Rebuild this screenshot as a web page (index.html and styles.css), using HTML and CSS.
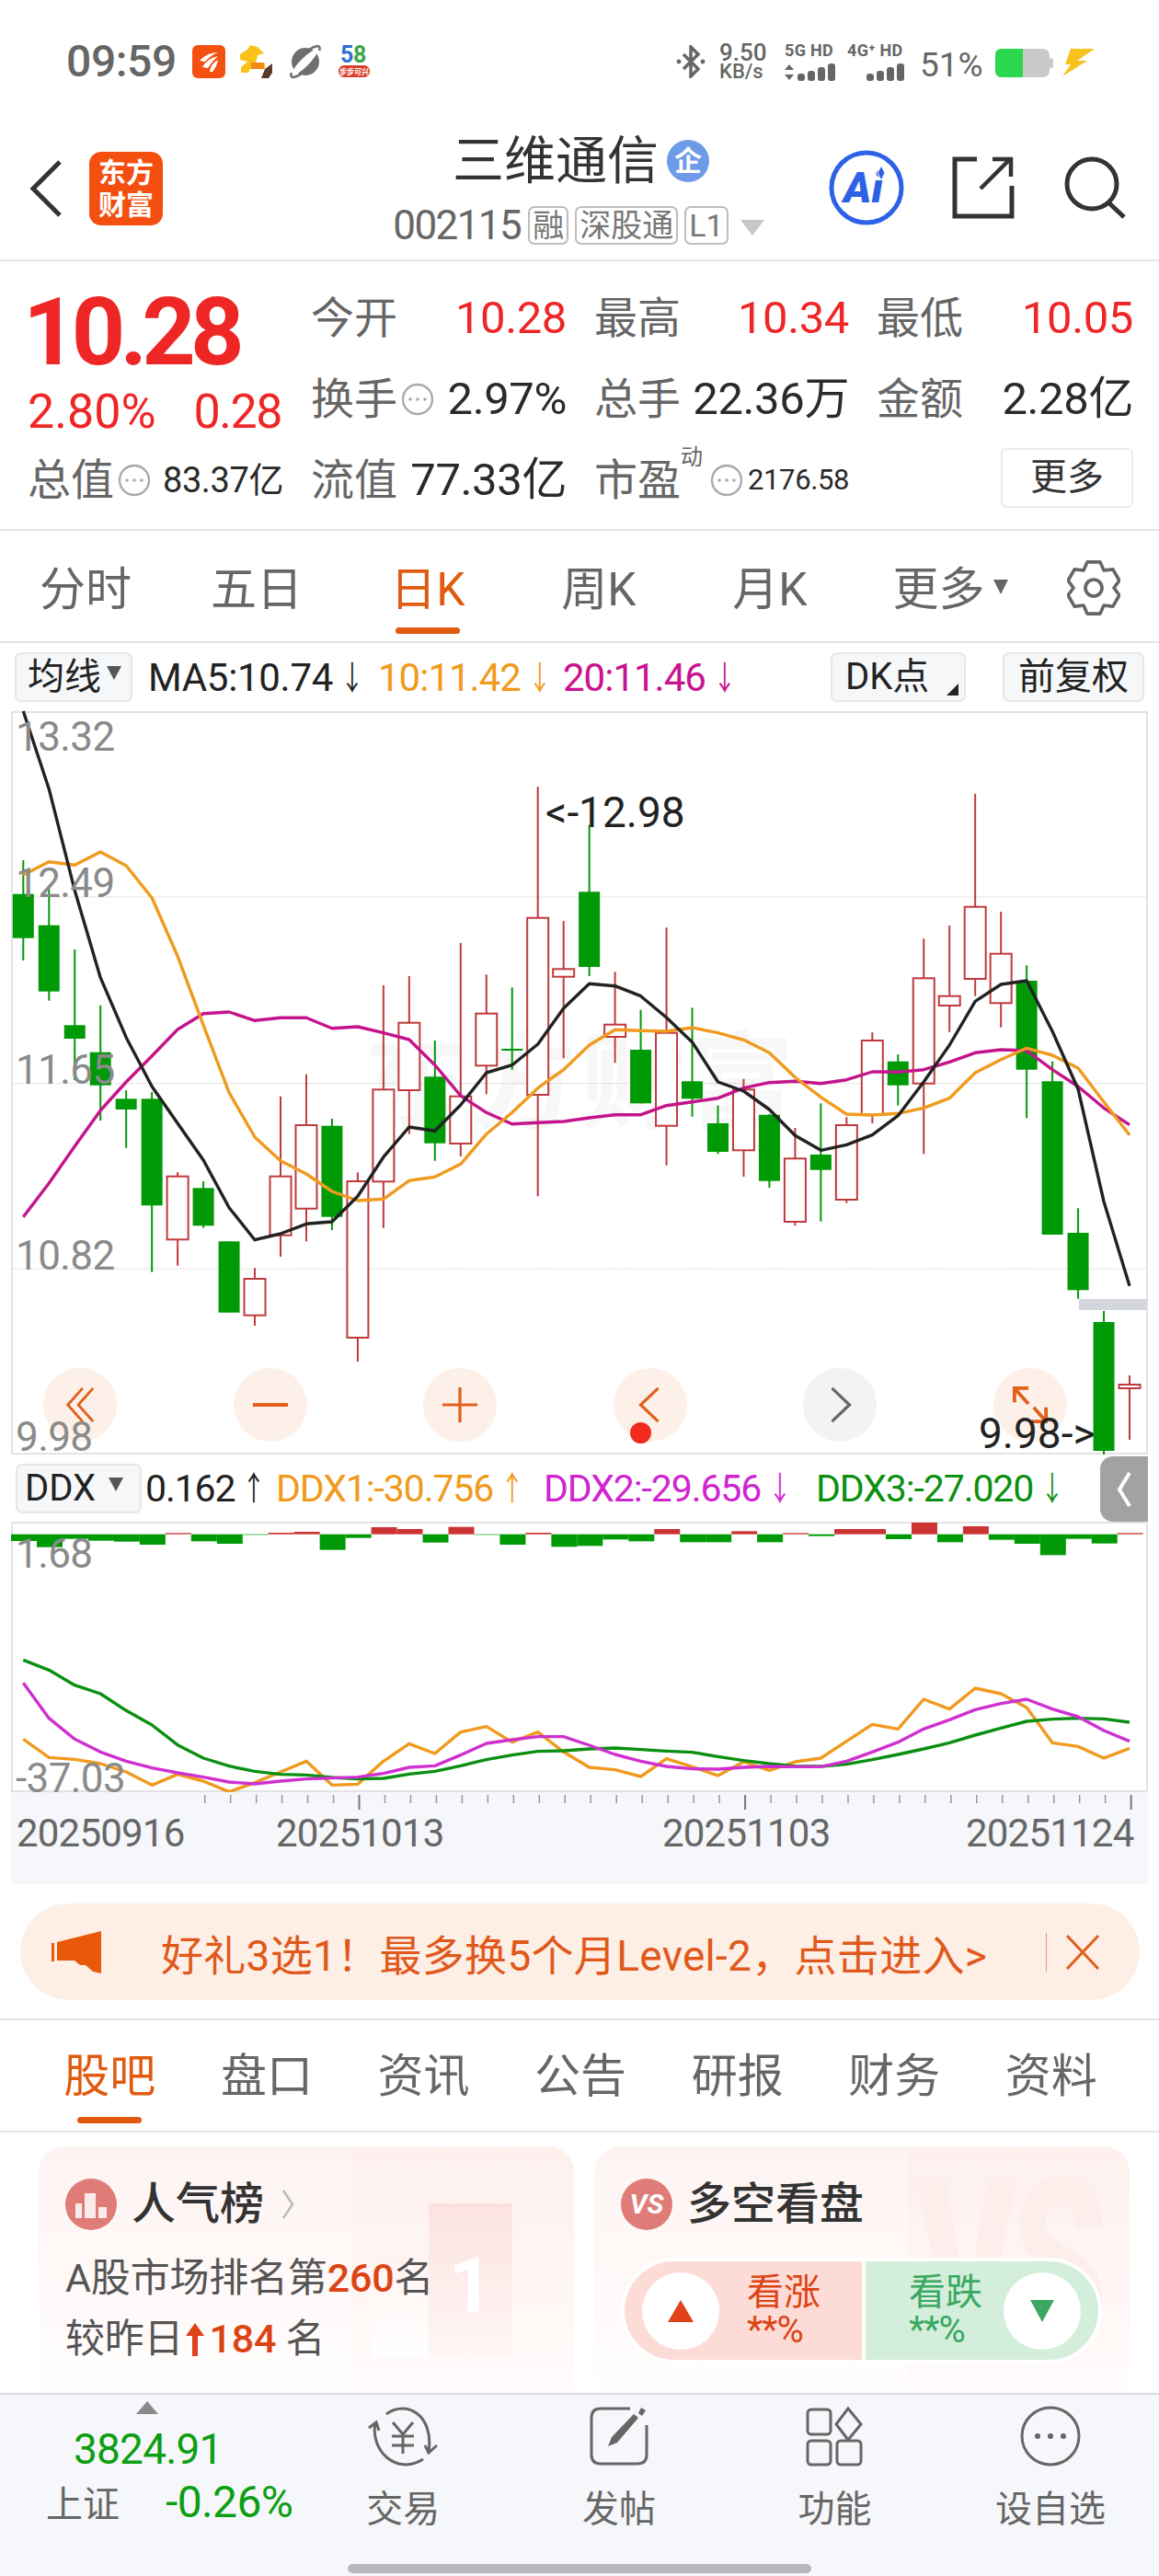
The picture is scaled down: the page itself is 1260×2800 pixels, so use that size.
FILE: index.html
```html
<!DOCTYPE html>
<html lang="zh-CN">
<head>
<meta charset="utf-8">
<title>三维通信</title>
<link rel="stylesheet" href="styles.css">
</head>
<body>
<div class="page">
  <div class="status">
    <span class="time">09:59</span>
    <svg class="app app1" viewBox="0 0 36 36"><rect width="36" height="36" rx="6" fill="#f4500f"/><path d="M8 17 Q16 8 28 8 Q20 11 14 18Z M11 24 Q17 14 28 12 Q22 17 17 25Z M19 29 Q20 20 28 16 Q27 23 22 29Z" fill="#fff"/></svg>
    <svg class="app app2" viewBox="0 0 36 36"><path d="M1 10 L10 4 L12 0 L20 2 L27 9 L20 11 L18 20 L28 20 L28 26 L12 26 L10 30 L2 30 L2 24 L9 18 L1 16Z" fill="#f9c21b"/><rect x="13" y="19" width="14" height="7" fill="#f28a18"/><path d="M24 36 L28 26 L36 20 L36 30 L32 36Z" fill="#5a3a2c"/></svg>
    <svg class="app app3" viewBox="0 0 36 36"><circle cx="18" cy="18" r="15" fill="#6f6f6f"/><ellipse cx="17" cy="19" rx="20" ry="4.5" transform="rotate(-45 17 19)" fill="#fff"/><path d="M3 30 Q1 35 5 35 Q10 34 14 31 M33 6 Q35 1 31 1 Q26 2 22 5" fill="none" stroke="#6f6f6f" stroke-width="2.5"/></svg>
    <svg class="app app4" viewBox="0 0 36 36"><text class="t58a" x="3" y="19">5</text><text class="t58b" x="17" y="19">8</text><rect x="1" y="22" width="34" height="13" rx="6" fill="#d8402c"/><text class="t58c" x="18" y="32">步步可兴</text></svg>
    <div class="sys">
      <svg class="bt" viewBox="0 0 32 36"><path d="M8 10 L24 26 L16 34 V2 L24 10 L8 26" fill="none" stroke="#666" stroke-width="3.5"/><circle cx="3" cy="18" r="2.4" fill="#666"/><circle cx="29" cy="18" r="2.4" fill="#666"/></svg>
      <div class="speed"><span class="sp1">9.50</span><span class="sp2">KB/s</span></div>
      <div class="sig s5g"><span class="sigt">5G HD</span>
        <svg class="bars" viewBox="0 0 56 20"><path d="M0 7 L5 1 L10 7Z M0 12 L5 18 L10 12Z" fill="#666"/><rect x="14" y="11" width="8" height="8" rx="3" fill="#666"/><rect x="25" y="8" width="8" height="11" rx="3" fill="#666"/><rect x="36" y="4" width="8" height="15" rx="3" fill="#666"/><rect x="47" y="0" width="8" height="19" rx="3" fill="#666"/></svg></div>
      <div class="sig s4g"><span class="sigt">4G⁺ HD</span>
        <svg class="bars2" viewBox="0 0 42 20"><rect x="0" y="11" width="8" height="8" rx="3" fill="#666"/><rect x="11" y="8" width="8" height="11" rx="3" fill="#666"/><rect x="22" y="4" width="8" height="15" rx="3" fill="#666"/><rect x="33" y="0" width="8" height="19" rx="3" fill="#666"/></svg></div>
      <span class="pct">51%</span>
      <svg class="batt" viewBox="0 0 63 31"><rect width="59" height="31" rx="7" fill="#c9c9c9"/><path d="M7 0 H30 V31 H7 Q0 31 0 24 V7 Q0 0 7 0Z" fill="#2bd74c"/><rect x="59" y="10" width="4" height="11" rx="2" fill="#c9c9c9"/></svg>
      <svg class="bolt" viewBox="0 0 35 30"><path d="M9 0 H35 L16 13 H27 L0 30 L9 17 H3Z" fill="#f6c21c"/></svg>
    </div>
  </div>

  <header class="head">
    <svg class="back" viewBox="0 0 36 64"><path d="M33 3 L4 32 L33 61" fill="none" stroke="#333" stroke-width="5"/></svg>
    <div class="logo"><span>东方</span><span>财富</span></div>
    <div class="titlebox">
      <div class="titlerow"><span class="title">三维通信</span><span class="qi">企</span></div>
      <div class="coderow"><span class="code">002115</span><span class="tag">融</span><span class="tag">深股通</span><span class="tag">L1</span><span class="tri"></span></div>
    </div>
    <div class="headicons">
      <svg class="ai" viewBox="0 0 82 84"><circle cx="41" cy="42" r="38" fill="#fff" stroke="#2d62e6" stroke-width="5"/><text class="aitxt" x="16" y="58">Ai</text><path d="M57 18 L61 26 L57 34 L53 26Z" fill="#2d62e6" stroke="#fff" stroke-width="1"/></svg>
      <svg class="share" viewBox="0 0 68 68"><path d="M27 3 H3 V65 H65 V32" fill="none" stroke="#333" stroke-width="5"/><path d="M31 35 L63 3 M44 3 H64 V22" fill="none" stroke="#333" stroke-width="4.5"/></svg>
      <svg class="search" viewBox="0 0 68 68"><circle cx="30" cy="30" r="27" fill="none" stroke="#333" stroke-width="5"/><path d="M49 51 L65 66" stroke="#333" stroke-width="5"/></svg>
    </div>
  </header>

  <section class="quote">
    <div class="pricecell">
      <div class="big">10.28</div>
      <div class="subs"><span>2.80%</span><span>0.28</span></div>
    </div>
    <div class="stat"><span class="lbl">今开</span><span class="val red">10.28</span></div>
    <div class="stat"><span class="lbl">最高</span><span class="val red">10.34</span></div>
    <div class="stat last"><span class="lbl">最低</span><span class="val red">10.05</span></div>
    <div class="stat r2"><span class="lbl">换手<svg class="info" viewBox="0 0 36 36"><circle cx="18" cy="18" r="16" fill="none" stroke="#aaa" stroke-width="2.4"/><circle cx="10" cy="18" r="1.8" fill="#aaa"/><circle cx="18" cy="18" r="1.8" fill="#aaa"/><circle cx="26" cy="18" r="1.8" fill="#aaa"/></svg></span><span class="val">2.97%</span></div>
    <div class="stat r2"><span class="lbl">总手</span><span class="val">22.36万</span></div>
    <div class="stat last r2"><span class="lbl">金额</span><span class="val">2.28亿</span></div>
    <div class="stat c0"><span class="lbl">总值<svg class="info" viewBox="0 0 36 36"><circle cx="18" cy="18" r="16" fill="none" stroke="#aaa" stroke-width="2.4"/><circle cx="10" cy="18" r="1.8" fill="#aaa"/><circle cx="18" cy="18" r="1.8" fill="#aaa"/><circle cx="26" cy="18" r="1.8" fill="#aaa"/></svg></span><span class="val mid">83.37亿</span></div>
    <div class="stat"><span class="lbl">流值</span><span class="val">77.33亿</span></div>
    <div class="stat"><span class="lbl">市盈<sup class="dong">动</sup><svg class="info" viewBox="0 0 36 36"><circle cx="18" cy="18" r="16" fill="none" stroke="#aaa" stroke-width="2.4"/><circle cx="10" cy="18" r="1.8" fill="#aaa"/><circle cx="18" cy="18" r="1.8" fill="#aaa"/><circle cx="26" cy="18" r="1.8" fill="#aaa"/></svg></span><span class="val small">2176.58</span></div>
    <div class="stat last morecell"><span class="more">更多</span></div>
  </section>

  <nav class="periods">
    <div class="ptab"><span>分时</span></div>
    <div class="ptab"><span>五日</span></div>
    <div class="ptab on"><span>日K</span><i class="bar"></i></div>
    <div class="ptab"><span>周K</span></div>
    <div class="ptab"><span>月K</span></div>
    <div class="ptab pmore"><span>更多<b class="ptri"></b></span></div>
    <svg class="gear" viewBox="0 0 58 60"><polygon points="22,1.9 36,1.9 40,11 49.9,9.9 56.9,22 51,30 56.9,38 49.9,50.1 40,49 36,58.1 22,58.1 18,49 8.1,50.1 1.1,38 7,30 1.1,22 8.1,9.9 18,11" fill="none" stroke="#666" stroke-width="3.6" stroke-linejoin="round"/><circle cx="29" cy="30" r="9" fill="none" stroke="#666" stroke-width="3.6"/></svg>
  </nav>

  <div class="marow">
    <div class="sel sel-ma">均线<b class="stri"></b></div>
    <span class="ma mk">MA5:10.74<i class="ar">↓</i></span>
    <span class="ma mo">10:11.42<i class="ar">↓</i></span>
    <span class="ma mm">20:11.46<i class="ar">↓</i></span>
    <div class="sel sel-dk">DK点<b class="corner"></b></div>
    <div class="sel sel-fq">前复权</div>
  </div>

  <div class="kchart">
    <div class="wm">东方财富</div>
    <div class="ctrls">
      <div class="cb"><svg viewBox="0 0 34 42"><path d="M20 2 L3 21 L20 40 M32 2 L15 21 L32 40" fill="none" stroke="#e0601c" stroke-width="3"/></svg></div>
      <div class="cb"><svg viewBox="0 0 42 42"><path d="M1 21 H41" stroke="#e0601c" stroke-width="4"/></svg></div>
      <div class="cb"><svg viewBox="0 0 42 42"><path d="M1 21 H41 M21 1 V41" stroke="#e0601c" stroke-width="3.4"/></svg></div>
      <div class="cb"><svg viewBox="0 0 42 42"><path d="M30 2 L10 21 L30 40" fill="none" stroke="#e0601c" stroke-width="3.4"/></svg><i class="reddot"></i></div>
      <div class="cb gray"><svg viewBox="0 0 42 42"><path d="M12 2 L32 21 L12 40" fill="none" stroke="#666" stroke-width="3.4"/></svg></div>
      <div class="cb"><svg viewBox="0 0 42 42"><path d="M3 18 V2 H19 M3 2 L19 20 M39 24 V40 H23 M39 40 L25 24" fill="none" stroke="#e0601c" stroke-width="4"/></svg></div>
    </div>
    <svg id="kline" class="chartsvg" width="1260" height="808" viewBox="0 772 1260 808">
      <rect class="frame" x="13" y="773" width="1234" height="806"/>
      <path class="grid" d="M13 974 H1247 M13 1176.7 H1247 M13 1378 H1247"/>
      <g id="candles"></g>
      <rect class="pricebar" x="1173" y="1411" width="74" height="12"/>
      <g id="malines"></g>
      <text class="ylab" x="17" y="815">13.32</text>
      <text class="ylab" x="17" y="974">12.49</text>
      <text class="ylab" x="17" y="1177">11.65</text>
      <text class="ylab" x="17" y="1379">10.82</text>
      <text class="ylab" x="17" y="1576">9.98</text>
      <text class="mark" x="593" y="898">&lt;-12.98</text>
      <text class="mark" x="1064" y="1573">9.98-&gt;</text>
    </svg>
  </div>

  <div class="ddxrow">
    <div class="sel sel-ddx">DDX<b class="stri"></b></div>
    <span class="dx dk">0.162<i class="ar">↑</i></span>
    <span class="dx d1">DDX1:-30.756<i class="ar">↑</i></span>
    <span class="dx d2">DDX2:-29.656<i class="ar">↓</i></span>
    <span class="dx d3">DDX3:-27.020<i class="ar">↓</i></span>
    <div class="collapse"><svg viewBox="0 0 18 42"><path d="M15 3 L4 21 L15 39" fill="none" stroke="#fff" stroke-width="4"/></svg></div>
  </div>

  <svg id="ddx" class="chartsvg" width="1260" height="294" viewBox="0 1653 1260 294">
    <path class="frame2" d="M12 1654 H1247 M13 1654 V1946 M1247 1654 V1946 M12 1946 H1247"/>
    <g id="ddxbars"></g>
    <g id="ddxlines"></g>
    <text class="ylab" x="17" y="1703">1.68</text>
    <text class="ylab" x="17" y="1947">-37.03</text>
  </svg>
  <svg id="axis" class="chartsvg axis" width="1260" height="100" viewBox="0 1947 1260 100">
    <g id="ticks"></g>
    <text class="dlab" x="18" y="2006">20250916</text>
    <text class="dlab" x="300" y="2006">20251013</text>
    <text class="dlab" x="720" y="2006">20251103</text>
    <text class="dlab" x="1050" y="2006">20251124</text>
  </svg>

  <div class="promo">
    <svg class="horn" viewBox="0 0 54 46"><path d="M0 13 H3 V33 H0Z M6 12 L54 0 V46 L45 44 L37 37 L31 37 L25 32 L6 32Z" fill="#e8590c"/></svg>
    <span class="promotxt">好礼3选1！最多换5个月Level-2，点击进入&gt;</span>
    <i class="pdiv"></i>
    <svg class="pclose" viewBox="0 0 38 38"><path d="M2 1 L36 37 M36 1 L2 37" stroke="#e0601c" stroke-width="3"/></svg>
  </div>

  <nav class="tabs">
    <div class="tab on"><span>股吧</span><i class="bar"></i></div>
    <div class="tab"><span>盘口</span></div>
    <div class="tab"><span>资讯</span></div>
    <div class="tab"><span>公告</span></div>
    <div class="tab"><span>研报</span></div>
    <div class="tab"><span>财务</span></div>
    <div class="tab"><span>资料</span></div>
  </nav>

  <section class="cards">
    <div class="card">
      <div class="deco-side"></div><div class="deco-bar2"></div><div class="deco-bar"><span>1</span></div>
      <div class="chead">
        <svg class="cicon" viewBox="0 0 56 56"><circle cx="28" cy="28" r="28" class="cgrad"/><path d="M11 27 H18 V43 H11Z M21 16 H33 V43 H21Z M36 31 H45 V43 H36Z" fill="#fff" opacity=".85"/></svg>
        <span class="ctitle">人气榜</span>
        <svg class="cchev" viewBox="0 0 16 36"><path d="M3 3 L13 18 L3 33" fill="none" stroke="#bbb" stroke-width="2.5"/></svg>
      </div>
      <p class="cline">A股市场排名第<em>260</em>名</p>
      <p class="cline">较昨日<svg class="uparr" viewBox="0 0 22 40"><path d="M11 2 L21 16 H14 V38 H8 V16 H1Z" fill="#e0431a"/></svg><em class="up">184</em> 名</p>
    </div>
    <div class="card">
      <div class="deco-side"></div><div class="deco-vs">VS</div>
      <div class="chead">
        <svg class="cicon" viewBox="0 0 56 56"><circle cx="28" cy="28" r="28" class="cgrad"/><text class="vstxt" x="28" y="38">VS</text></svg>
        <span class="ctitle">多空看盘</span>
      </div>
      <div class="pill">
        <div class="pl">
          <div class="pball"><i class="tu"></i></div>
          <div class="ptxt"><span>看涨</span><span class="pp">**%</span></div>
        </div>
        <div class="pr">
          <div class="ptxt"><span>看跌</span><span class="pp">**%</span></div>
          <div class="pball"><i class="td"></i></div>
        </div>
      </div>
    </div>
  </section>

  <footer class="dock">
    <div class="idx">
      <i class="idxtri"></i>
      <div class="idxval">3824.91</div>
      <div class="idxrow"><span class="idxn">上证</span><span class="idxp">-0.26%</span></div>
    </div>
    <div class="nav">
      <svg class="nv" viewBox="0 0 76 66"><path d="M20 9 C42 -7 72 10 66 50 M60 58 C32 76 2 50 8 18" fill="none" stroke="#666" stroke-width="3"/><path d="M1 24 L9 18 L12 27 M75 43 L66 51 L62 43" fill="none" stroke="#666" stroke-width="3"/><path d="M27 18 L38 31 L49 18 M26 33 H50 M26 43 H50 M38 31 V52" fill="none" stroke="#666" stroke-width="3"/></svg>
      <span>交易</span>
    </div>
    <div class="nav">
      <svg class="nv" viewBox="0 0 64 66"><path d="M44 3 H12 Q2 3 2 13 V53 Q2 63 12 63 H52 Q62 63 62 53 V21" fill="none" stroke="#666" stroke-width="3"/><path d="M20 44 L24 34 L48 9 L53 13 L30 40Z" fill="#666"/><path d="M53 8 L56 2 L61 5 L57 11Z" fill="#666"/></svg>
      <span>发帖</span>
    </div>
    <div class="nav">
      <svg class="nv" viewBox="0 0 62 66"><rect x="2" y="4" width="25" height="27" rx="4" fill="none" stroke="#666" stroke-width="3"/><path d="M46 3 L60 20 L46 37 L33 20Z" fill="none" stroke="#666" stroke-width="3"/><rect x="2" y="38" width="25" height="26" rx="4" fill="none" stroke="#666" stroke-width="3"/><rect x="34" y="38" width="26" height="26" rx="4" fill="none" stroke="#666" stroke-width="3"/></svg>
      <span>功能</span>
    </div>
    <div class="nav">
      <svg class="nv" viewBox="0 0 66 66"><circle cx="33" cy="33" r="31" fill="none" stroke="#666" stroke-width="3"/><circle cx="19" cy="33" r="3" fill="#666"/><circle cx="33" cy="33" r="3" fill="#666"/><circle cx="47" cy="33" r="3" fill="#666"/></svg>
      <span>设自选</span>
    </div>
    <i class="handle"></i>
  </footer>
</div>
<script src="script.js"></script>
</body>
</html>
```

FILE: styles.css
```css
* { box-sizing: border-box; }
html, body { margin: 0; padding: 0; background: #fff; }
body { font-family: Roboto, "Noto Sans CJK SC", sans-serif; color: #222; }
.page { width: 1260px; height: 2800px; overflow: hidden; display: flex; flex-direction: column; }
i, em { font-style: normal; }
b { font-weight: normal; }
p { margin: 0; }

/* status bar */
.status { height: 134px; flex: none; display: flex; align-items: center; padding: 0 70px 0 72px; color: #666; }
.time { font-size: 48px; font-weight: 500; width: 118px; letter-spacing: -.4px; line-height: 1; white-space: nowrap; }
.app { width: 36px; height: 36px; flex: none; overflow: visible; }
.app1 { margin-left: 19px; }
.app2 { margin-left: 15px; }
.app3 { margin-left: 18px; }
.app4 { margin-left: 17px; }
.t58a, .t58b { font: bold 25px Roboto, sans-serif; }
.t58a { fill: #2b6fd6; }
.t58b { fill: #3aa648; }
.t58c { font: bold 8px "Noto Sans CJK SC", sans-serif; fill: #fff; text-anchor: middle; }
.sys { margin-left: auto; display: flex; align-items: center; }
.bt { width: 32px; height: 36px; flex: none; }
.speed { margin-left: 15px; width: 56px; display: flex; flex-direction: column; font-weight: 500; }
.sp1 { font-size: 26px; line-height: 22px; }
.sp2 { font-size: 22px; line-height: 20px; }
.sig { display: flex; flex-direction: column; font-weight: 700; }
.sigt { font-size: 18px; line-height: 19px; white-space: nowrap; letter-spacing: .3px; }
.s5g { margin-left: 15px; width: 68px; }
.s4g { width: 67px; }
.bars { width: 56px; height: 20px; display: block; margin-top: 5px; }
.bars2 { width: 42px; height: 20px; display: block; margin-top: 5px; margin-left: 21px; }
.pct { font-size: 37px; margin-left: 12px; width: 82px; line-height: 1; padding-top: 6px; }
.batt { width: 63px; height: 31px; flex: none; margin-top: 3px; }
.bolt { width: 35px; height: 30px; flex: none; margin-left: 10px; margin-top: 2px; }

/* header */
.head { height: 150px; flex: none; display: flex; border-bottom: 2px solid #e4e4e6; padding-left: 32px; position: relative; }
.back { width: 36px; height: 64px; margin-top: 39px; flex: none; }
.logo { width: 80px; height: 80px; margin: 31px 0 0 29px; background: #f44f10; border-radius: 13px; color: #fff; font-weight: 700; font-size: 30px; line-height: 35px; flex: none; display: flex; flex-direction: column; align-items: center; justify-content: center; }
.titlebox { width: 402px; margin-left: 251px; flex: none; display: flex; flex-direction: column; align-items: center; }
.titlerow { display: flex; align-items: center; height: 56px; margin-top: 13px; padding-left: 5px; }
.title { font-size: 56px; color: #333; line-height: 56px; }
.qi { width: 46px; height: 46px; border-radius: 50%; background: #6e9be8; color: #fff; font-size: 30px; line-height: 46px; text-align: center; margin-left: 9px; font-weight: 700; }
.coderow { display: flex; align-items: center; margin-top: 20px; height: 44px; }
.code { font-size: 44px; color: #666; width: 147px; letter-spacing: -1.6px; line-height: 44px; white-space: nowrap; }
.tag { border: 2px solid #bdbdbd; border-radius: 7px; height: 42px; line-height: 38px; font-size: 34px; color: #777; padding: 0 3px; margin-right: 7px; white-space: nowrap; }
.tri { border-left: 13px solid transparent; border-right: 13px solid transparent; border-top: 17px solid #c8c8c8; margin-left: 6px; margin-top: 4px; }
.headicons { flex: 1; display: flex; padding-left: 71px; }
.ai { width: 82px; height: 84px; margin-top: 28px; flex: none; }
.aitxt { font: italic 900 46px Roboto, sans-serif; fill: #2d62e6; }
.share { width: 68px; height: 68px; margin: 36px 0 0 52px; flex: none; }
.search { width: 68px; height: 68px; margin: 36px 0 0 54px; flex: none; }

/* quote */
.quote { height: 293px; flex: none; border-bottom: 2px solid #e4e4e6; padding: 18px 0 0 30px; display: grid; grid-template-columns: 308px 308px 307px 279px; grid-template-rows: 88px 88px 88px; }
.pricecell { grid-row: 1 / span 2; display: flex; flex-direction: column; color: #ee2626; }
.big { font-size: 102px; font-weight: 700; line-height: 118px; letter-spacing: -5.8px; margin-left: -5px; }
.subs { display: flex; gap: 41px; font-size: 52px; line-height: 56px; }
.subs span:last-child { letter-spacing: -1.5px; }
.stat { display: flex; justify-content: space-between; align-items: center; padding-right: 30px; height: 88px; }
.stat.last { padding-right: 0; }
.lbl { font-size: 47px; color: #666; display: flex; align-items: center; position: relative; line-height: 56px; white-space: nowrap; }
.val { font-size: 49px; line-height: 56px; white-space: nowrap; color: #2a2a2a; letter-spacing: -.4px; }
.val.red { color: #ee2626; }
.val.mid { font-size: 38px; letter-spacing: -.4px; }
.val.small { font-size: 31px; letter-spacing: -.4px; }
.info { width: 36px; height: 36px; margin-left: 4px; flex: none; }
.dong { font-size: 24px; line-height: 26px; align-self: flex-start; margin-top: -10px; width: 28px; }
.morecell { justify-content: flex-end; }
.more { width: 144px; height: 65px; border: 2px solid #ebebeb; border-radius: 6px; font-size: 40px; line-height: 60px; text-align: center; color: #333; margin-top: -5px; }

/* period tabs */
.periods { height: 122px; flex: none; display: flex; border-bottom: 2px solid #e4e4e6; }
.ptab { width: 186px; flex: none; display: flex; flex-direction: column; align-items: center; padding-top: 34px; font-size: 50px; line-height: 60px; color: #666; }
.ptab.on { color: #e05a10; }
.pmore { padding-left: 20px; }
.bar { width: 70px; height: 7px; border-radius: 4px; background: #e05a10; margin-top: 11px; display: block; }
.ptri { display: inline-block; border-left: 8px solid transparent; border-right: 8px solid transparent; border-top: 16px solid #666; margin-left: 9px; vertical-align: 12px; }
.gear { width: 58px; height: 60px; margin: 32px 0 0 44px; flex: none; }

/* MA row */
.marow { height: 74px; flex: none; display: flex; align-items: center; padding: 0 16px; }
.sel { background: #f6f7f9; border: 2px solid #e6e6e8; border-radius: 7px; font-size: 40px; color: #222; height: 54px; line-height: 50px; white-space: nowrap; position: relative; }
.sel-ma { width: 128px; padding-left: 12px; }
.stri { display: inline-block; border-left: 8px solid transparent; border-right: 8px solid transparent; border-top: 15px solid #555; margin-left: 6px; vertical-align: 10px; }
.ma { font-size: 42px; white-space: nowrap; flex: none; }
.ar { display: inline-block; width: 22px; margin-left: 5px; text-align: center; font-size: 36px; line-height: 40px; transform: scaleX(.7); vertical-align: 1px; }
.mk { margin-left: 17px; width: 250px; color: #222; letter-spacing: -.3px; }
.mo { width: 201px; color: #f09a1c; letter-spacing: -1px; }
.mm { width: 200px; color: #c8128e; letter-spacing: -1px; }
.sel-dk { margin-left: auto; width: 147px; padding-left: 14px; }
.corner { position: absolute; right: 6px; bottom: 5px; border-left: 13px solid transparent; border-bottom: 13px solid #222; }
.sel-fq { margin-left: 40px; width: 154px; text-align: center; }

/* charts */
.kchart { height: 808px; flex: none; position: relative; }
.chartsvg { display: block; flex: none; position: relative; overflow: visible; }
.frame { fill: none; stroke: #e2e3e6; stroke-width: 2; }
.frame2 { fill: none; stroke: #e2e3e6; stroke-width: 2; }
.grid { fill: none; stroke: #c8c8c8; stroke-width: 1; stroke-dasharray: 1.5 1.5; }
.pricebar { fill: #d3d6db; }
.wm { position: absolute; left: 395px; top: 340px; font-size: 114px; line-height: 130px; color: #f7f7f7; font-weight: 700; letter-spacing: 4px; white-space: nowrap; }
.ctrls { position: absolute; left: 47px; top: 714px; display: flex; gap: 126.5px; }
.cb { width: 80px; height: 80px; border-radius: 50%; background: #fdf0e8; display: flex; align-items: center; justify-content: center; position: relative; }
.cb.gray { background: #f3f3f3; }
.cb svg { width: 40px; height: 40px; display: block; }
.reddot { position: absolute; left: 18px; top: 59px; width: 23px; height: 23px; background: #f32a20; border-radius: 50%; }
.ylab { font-size: 44px; fill: #8a8a8a; letter-spacing: -.6px; }
.mark { font-size: 46px; fill: #222; }
.c-up { fill: #fff; stroke: #bf3a3c; stroke-width: 2; }
.w-up { stroke: #bf3a3c; stroke-width: 2; }
.c-dn { fill: #009a06; stroke: none; }
.w-dn { stroke: #009a06; stroke-width: 2; }
.l { fill: none; stroke-width: 3.4; stroke-linejoin: round; }
.l-k { stroke: #222; }
.l-o { stroke: #f09a1e; }
.l-m { stroke: #c4148c; }
.l-g { stroke: #0b8f12; stroke-width: 3.4; }
.l-dm { stroke: #cf30cf; stroke-width: 3.4; }
.b-g { fill: #009a06; }
.b-r { fill: #cc3333; }

.ddxrow { height: 73px; flex: none; display: flex; align-items: center; padding-left: 17px; position: relative; }
.sel-ddx { width: 137px; padding-left: 8px; }
.sel-ddx .stri { margin-left: 14px; }
.dx { font-size: 41px; white-space: nowrap; letter-spacing: -1.1px; flex: none; }
.dk { margin-left: 4px; width: 142px; color: #222; }
.d1 { width: 291px; color: #f09a1c; }
.d2 { width: 296px; color: #d024d0; }
.d3 { color: #0b9010; }
.collapse { position: absolute; right: 12px; top: 2px; width: 52px; height: 71px; background: #a2a2a2; border-radius: 14px 0 0 14px; display: flex; align-items: center; justify-content: center; }
.collapse svg { width: 18px; height: 42px; }

.axis { background: #f6f7fa; clip-path: inset(0 12px 0 12px); }
.tick { stroke: #999; stroke-width: 1.5; }
.tick.major { stroke-width: 2; stroke: #777; }
.dlab { font-size: 42px; fill: #666; letter-spacing: -.8px; }

/* promo */
.promo { margin: 21px 21px 20px 22px; height: 105px; flex: none; border-radius: 53px; background: #fdeee6; display: flex; align-items: center; padding-left: 34px; }
.horn { width: 54px; height: 46px; flex: none; }
.promotxt { font-size: 46px; color: #e0591a; margin-left: 65px; white-space: nowrap; width: 897px; letter-spacing: .3px; }
.pdiv { width: 1px; height: 42px; background: #e39b70; margin-left: 65px; }
.pclose { width: 38px; height: 38px; margin-left: 20px; flex: none; }

/* tabs */
.tabs { height: 124px; flex: none; display: flex; border-top: 2px solid #e4e4e6; border-bottom: 2px solid #e4e4e6; padding-left: 34px; }
.tab { width: 170.6px; flex: none; display: flex; flex-direction: column; align-items: center; padding-top: 31px; font-size: 50px; line-height: 60px; color: #666; }
.tab.on { color: #e05a10; }
.tab .bar { margin-top: 14px; }

/* cards */
.cards { flex: 1; min-height: 0; overflow: hidden; display: flex; gap: 22px; padding: 15px 0 0 42px; }
.card { width: 582px; height: 300px; flex: none; border-radius: 28px 28px 0 0; background: linear-gradient(#fdf4f2, #fffafa 60%, #fff); position: relative; overflow: hidden; padding: 35px 0 0 29px; }
.deco-side { position: absolute; left: 340px; top: 0; right: 0; bottom: 0; background: linear-gradient(#fdeeeb, #fff8f7 70%, #fffdfc); opacity: .7; }
.deco-bar { position: absolute; left: 424px; top: 62px; width: 91px; height: 168px; background: linear-gradient(#fbe3e0, #fff6f5); color: #fff; font-size: 84px; font-weight: 700; line-height: 84px; padding-top: 48px; text-align: center; }
.deco-bar2 { position: absolute; left: 364px; top: 120px; width: 60px; height: 110px; background: linear-gradient(#fff3f1, #fff); }
.deco-vs { position: absolute; left: 350px; top: 0; font-size: 260px; font-weight: 900; color: #fdeeeb; line-height: 260px; letter-spacing: -10px; white-space: nowrap; transform: scaleX(.64); transform-origin: left center; }
.chead { display: flex; align-items: center; height: 56px; position: relative; }
.cicon { width: 56px; height: 56px; flex: none; }
.cgrad { fill: #df7c78; }
.vstxt { font: italic 700 30px Roboto, sans-serif; fill: #fff; text-anchor: middle; }
.ctitle { font-size: 48px; color: #333; margin-left: 16px; font-weight: 500; line-height: 56px; }
.cchev { width: 16px; height: 36px; margin-left: 18px; flex: none; }
.cline { font-size: 43px; line-height: 66px; color: #555; position: relative; white-space: nowrap; letter-spacing: -.2px; width: fit-content; }
.cline:nth-of-type(1) { margin-top: 19px; }
.cline em { color: #dd4414; font-weight: 500; }
.uparr { width: 22px; height: 40px; margin: 0 4px 0 2px; vertical-align: -6px; }
.pill { position: relative; margin: 34px 0 0 4px; width: 515px; height: 107px; border-radius: 54px; display: flex; overflow: hidden; box-shadow: 0 0 0 4px #fff; }
.pl, .pr { display: flex; align-items: center; }
.pl { width: 258px; background: #fddcd8; padding-left: 19px; color: #dd4414; }
.pr { width: 257px; border-left: 4px solid #fff; background: #d3eedb; padding-left: 47px; justify-content: space-between; padding-right: 19px; color: #3aa860; }
.pball { width: 84px; height: 84px; background: #fff; border-radius: 50%; display: flex; align-items: center; justify-content: center; flex: none; }
.ptxt { display: flex; flex-direction: column; font-size: 40px; line-height: 41px; }
.pl .ptxt { margin-left: 30px; }
.pp { font-size: 40px; letter-spacing: -1px; }
.tu { border-left: 14px solid transparent; border-right: 14px solid transparent; border-bottom: 24px solid #e0431a; }
.td { border-left: 13px solid transparent; border-right: 13px solid transparent; border-top: 24px solid #3aa860; }

/* bottom dock */
.dock { height: 199px; flex: none; background: #f6f7fa; border-top: 2px solid #d7dadf; display: flex; position: relative; }
.idx { width: 321px; flex: none; padding: 7px 0 0 50px; display: flex; flex-direction: column; }
.idxtri { border-left: 12px solid transparent; border-right: 12px solid transparent; border-bottom: 14px solid #8a8a8a; width: 24px; margin-left: 98px; }
.idxval { font-size: 46px; color: #0d9e14; line-height: 56px; margin: 10px 0 0 30px; letter-spacing: -.8px; }
.idxrow { display: flex; align-items: center; height: 56px; margin-top: 1px; }
.idxn { font-size: 40px; color: #666; }
.idxp { font-size: 48px; color: #0d9e14; margin-left: 50px; letter-spacing: -.6px; }
.nav { width: 234.6px; flex: none; display: flex; flex-direction: column; align-items: center; padding-top: 12px; font-size: 40px; color: #666; line-height: 48px; }
.nv { width: 76px; height: 66px; display: block; }
.nav span { margin-top: 23px; }
.handle { position: absolute; left: 378px; top: 184px; width: 504px; height: 10px; border-radius: 5px; background: #b8b8bb; }
```

FILE: script.js
```js
(function () {
  var NS = 'http://www.w3.org/2000/svg';
  function add(parent, tag, attrs) {
    var e = document.createElementNS(NS, tag);
    for (var k in attrs) e.setAttribute(k, attrs[k]);
    parent.appendChild(e);
    return e;
  }
  function cx(i) { return 25.3 + 27.97 * i; }

  // type, high, body top, body bottom, low
  var candles = [
    ['g',934,970.7,1018.7,1043],['g',964,1004.7,1076.7,1086.7],['g',1031,1113.3,1128,1173],['g',1091.7,1142.7,1178.7,1217],
    ['g',1184,1193.3,1205,1246.7],['g',1186,1193.3,1309.3,1381.7],['r',1273,1277.7,1346.3,1374.7],['g',1283,1290.3,1331.3,1333.7],
    ['g',1348.3,1348.3,1425.7,1425.7],['r',1377.3,1389,1428.7,1440],['r',1190.7,1277.7,1341.7,1365],['r',1166.7,1222,1312.7,1348.3],
    ['g',1215,1222.7,1321.7,1336],['r',1273.3,1283,1453,1479],['r',1070,1183.3,1283.3,1333.7],['r',1060,1110.7,1184,1231.7],
    ['g',1130,1169.3,1241.7,1260.7],['r',1024,1190.7,1242,1256],['r',1058.3,1100.7,1157.3,1188.3],['g',1072.3,1139,1141,1161.7],
    ['r',854.3,996.7,1189,1299.3],['r',1000,1052.3,1060.7,1149.3],['g',895.7,968.3,1050,1060],['r',1055.3,1112.7,1126,1154.3],
    ['g',1096.7,1140,1198.3,1198.3],['r',1007.3,1121.7,1222.7,1265.7],['g',1094.3,1174.3,1193.3,1212.7],['g',1200.7,1220,1251,1253.3],
    ['r',1171.7,1183.3,1249.3,1278],['g',1210,1210.7,1282.7,1290],['r',1225,1258.3,1327,1331.3],['g',1198.3,1254,1270.7,1326.7],
    ['r',1213.3,1222,1303,1306.7],['r',1121,1130,1210.7,1220],['g',1145,1152.7,1178.7,1200.7],['r',1019.3,1062.3,1176.7,1253.3],
    ['r',1005,1081.7,1092,1120.7],['r',861.7,984.7,1063,1081.7],['r',990,1035.7,1089.3,1115.7],['g',1048.3,1065,1161.7,1214.3],
    ['g',1152.7,1174.3,1341,1341],['g',1312.3,1339,1401.3,1410.7],['g',1424,1436,1576,1580],['r',1494,1504,1508,1564]
  ];
  var g = document.getElementById('candles');
  candles.forEach(function (c, i) {
    var x = cx(i), up = c[0] === 'r';
    add(g, 'line', { x1: x, x2: x, y1: c[1], y2: c[4], 'class': up ? 'w-up' : 'w-dn' });
    add(g, 'rect', { x: x - 11.5, y: c[2], width: 23, height: c[3] - c[2], 'class': up ? 'c-up' : 'c-dn' });
  });

  var ma5 = [772,856.7,966.7,1061.7,1126.7,1180,1220,1260,1311.7,1346.7,1340,1329.3,1327,1299.3,1256.7,1224,1228.3,1200,1165,1156.7,1134,1095,1068.3,1070.7,1081.7,1105,1131.7,1175,1185,1205,1233.3,1249.3,1243.3,1232.7,1211.7,1175,1135,1087.3,1069,1065,1120,1183,1305,1396.7];
  var ma10 = [950,935.7,939.3,925,940,975,1038.3,1113.3,1186.7,1235,1260.7,1275,1294,1304,1302.3,1282.3,1278.3,1264.3,1231.7,1208.3,1181.7,1161.7,1135,1118.3,1119.3,1120,1116,1121.7,1129.3,1143.3,1170,1191.7,1210,1211,1209.3,1203.3,1192.7,1165,1150.7,1138.3,1146,1160,1196.7,1232.7];
  var ma20 = [1321.7,1285,1245,1206,1175,1146.7,1118,1100.7,1099,1108.3,1105.3,1105.3,1116.7,1115,1121.7,1129,1156.7,1190,1208.3,1220.7,1219.3,1218,1214,1210.7,1210.7,1200.7,1196.7,1192.7,1181.7,1175.7,1174.3,1176.7,1172.7,1164,1164.3,1161.7,1153.3,1143.3,1140,1141,1161.7,1180,1203.3,1221.7];
  function poly(parent, ys, cls) {
    add(parent, 'polyline', { points: ys.map(function (y, i) { return cx(i).toFixed(1) + ',' + y; }).join(' '), 'class': 'l ' + cls });
  }
  var ml = document.getElementById('malines');
  poly(ml, ma20, 'l-m');
  poly(ml, ma10, 'l-o');
  poly(ml, ma5, 'l-k');

  // DDX histogram: tops/bottoms read from a 3x vertical crop starting at y=1570, base at 290
  var bars = [312,332,305,311,314,324,286,313,321,292,285,282,341,302,267,273,317,266,292,324,285,331,328,307,313,273,316,316,280,316,286,296,273,273,306,252,316,264,308,321,358,305,320,286];
  var bg = document.getElementById('ddxbars');
  function ry(z) { return 1570 + z / 3; }
  bars.forEach(function (z, i) {
    var x = 12 + 27.97 * i, top = Math.min(z, 290), bot = Math.max(z, 290);
    add(bg, 'rect', { x: x, y: ry(top), width: 28, height: (bot - top) / 3, 'class': z > 290 ? 'b-g' : 'b-r' });
  });
  var d3 = [700,733,782,810,865,912,977,1020,1046,1063,1073,1075,1083,1088,1086,1072,1063,1045,1025,1010,998,996,990,987,992,997,1001,1015,1028,1038,1046,1047,1040,1025,1008,990,970,945,922,900,893,890,892,903];
  var d2 = [775,890,958,1000,1030,1052,1068,1082,1098,1104,1095,1088,1085,1082,1070,1050,1045,1010,972,960,950,950,978,1008,1030,1047,1055,1056,1050,1047,1048,1048,1030,1000,968,925,895,862,842,828,860,885,930,965];
  var d1 = [958,1018,1024,1038,1065,1108,1073,1095,1130,1100,1065,1030,1108,1105,1030,973,1005,935,917,968,935,1000,1050,1058,1080,1022,1048,1077,1032,1060,1032,1020,965,910,925,828,860,792,810,855,970,982,1020,988];
  var dl = document.getElementById('ddxlines');
  poly(dl, d1.map(ry), 'l-o');
  poly(dl, d3.map(ry), 'l-g');
  poly(dl, d2.map(ry), 'l-dm');

  // date axis ticks
  var t = document.getElementById('ticks');
  for (var k = 0; k < 37; k++) {
    var x = 222.7 + 27.97 * k;
    var major = k === 6 || k === 21 || k === 36;
    add(t, 'line', { x1: x, x2: x, y1: 1950, y2: major ? 1966 : 1959, 'class': major ? 'tick major' : 'tick' });
  }
})();
```
